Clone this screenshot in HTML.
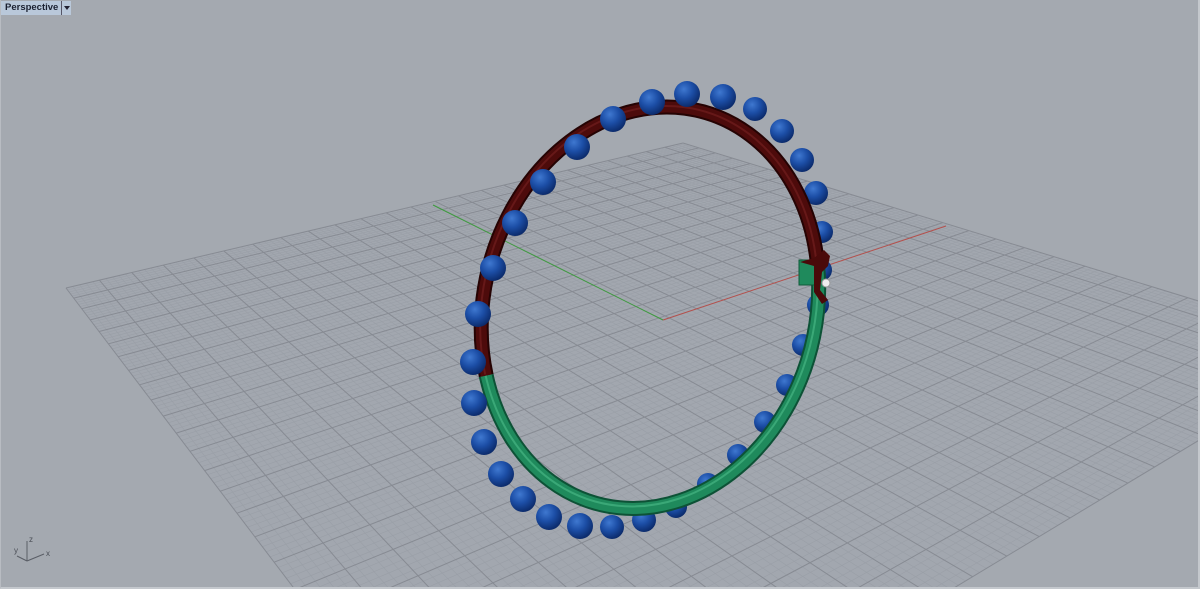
<!DOCTYPE html>
<html><head><meta charset="utf-8"><style>
html,body{margin:0;padding:0;width:1200px;height:589px;overflow:hidden;background:#a4a9b0}
#v{position:absolute;left:0;top:0;width:1200px;height:589px;display:block}
.bar{position:absolute;left:1px;top:1px;height:14px;display:flex}
.lab{height:14px;background:#b9c8da;font:bold 9.5px "Liberation Sans",sans-serif;color:#1a2030;line-height:14px;padding:0 3px 0 4px;white-space:nowrap}
.dd{position:relative;width:9px;height:14px;background:#b9c8da;border-left:1px solid #556}
.dd:after{content:"";position:absolute;left:2px;top:5px;border-left:3px solid transparent;border-right:3px solid transparent;border-top:4px solid #223}
.frame{position:absolute;left:0;top:0;width:1200px;height:589px;box-sizing:border-box;border:2px solid #c4c8cd;border-top:none;border-left:1px solid #b8bcc2}
</style></head><body>
<svg id="v" width="1200" height="589" viewBox="0 0 1200 589">
<defs>
<radialGradient id="bs" cx="0.38" cy="0.32" r="0.7">
<stop offset="0" stop-color="#3f78d0"/><stop offset="0.5" stop-color="#1c4ea6"/><stop offset="1" stop-color="#0b2a6a"/>
</radialGradient>
</defs>
<g id="grid"></g>
<line x1="663" y1="320" x2="433" y2="205" stroke="#3c9a3c" stroke-width="1"/>
<line x1="663" y1="320" x2="946" y2="226" stroke="#b4504c" stroke-width="1"/>
<g id="back"></g>
<path d="M486.2 375.5 A166 203 15 0 0 817.5 264" fill="none" stroke="#0d5236" stroke-width="15"/>
<path d="M486.2 375.5 A166 203 15 0 0 817.5 264" fill="none" stroke="#1f8a5c" stroke-width="11"/>
<path d="M486.2 375.5 A166 203 15 0 0 817.5 264" fill="none" stroke="#3aa877" stroke-width="2" transform="translate(-1,-2)"/>
<path d="M486.2 375.5 A166 203 15 1 1 817.5 264" fill="none" stroke="#250303" stroke-width="15"/>
<path d="M486.2 375.5 A166 203 15 1 1 817.5 264" fill="none" stroke="#4d0b0b" stroke-width="11"/>
<path d="M486.2 375.5 A166 203 15 1 1 817.5 264" fill="none" stroke="#661818" stroke-width="2" transform="translate(-1,-1)"/>
<g id="front"></g>
<rect x="799" y="260" width="17" height="25" fill="#1f8a5c" stroke="#0f5a3a"/>
<path d="M800 262 L814 258 L824 250 L830 256 L828 266 L822 272 L820 290 L828 300 L822 304 L814 292 L814 266 Z" fill="#4a0a0a"/>
<circle cx="826" cy="283" r="4" fill="#eeeeee" stroke="#999"/>
<g stroke="#5a5e66" stroke-width="1" fill="none">
<line x1="27" y1="561" x2="27" y2="541"/><line x1="27" y1="561" x2="44" y2="554"/><line x1="27" y1="561" x2="17" y2="556"/>
</g>
<g font-family="Liberation Sans,sans-serif" font-size="8" fill="#4a4e56">
<text x="29" y="542">z</text><text x="46" y="556">x</text><text x="14" y="553">y</text>
</g>
</svg>
<div class="bar"><div class="lab">Perspective</div><div class="dd"></div></div>
<div class="frame"></div>
<script>
var NS="http://www.w3.org/2000/svg";
var P=[[66,288],[683,143],[1352,348],[501,861]];
var x0=P[0][0],y0=P[0][1],x1=P[1][0],y1=P[1][1],x2=P[2][0],y2=P[2][1],x3=P[3][0],y3=P[3][1];
var dx1=x1-x2,dx2=x3-x2,dx3=x0-x1+x2-x3,dy1=y1-y2,dy2=y3-y2,dy3=y0-y1+y2-y3;
var den=dx1*dy2-dx2*dy1;
var g=(dx3*dy2-dx2*dy3)/den,h=(dx1*dy3-dx3*dy1)/den;
var a=x1-x0+g*x1,b=x3-x0+h*x3,c=x0,d=y1-y0+g*y1,e=y3-y0+h*y3,f=y0;
function M(u,v){var w=g*u+h*v+1;return[(a*u+b*v+c)/w,(d*u+e*v+f)/w];}
var G=document.getElementById("grid");
var poly=document.createElementNS(NS,"polygon");
poly.setAttribute("points",P.map(function(p){return p.join(",")}).join(" "));
poly.setAttribute("fill","#a2a7af");G.appendChild(poly);
var N=125;
function ln(p,q,maj){var l=document.createElementNS(NS,"line");
l.setAttribute("x1",p[0].toFixed(1));l.setAttribute("y1",p[1].toFixed(1));
l.setAttribute("x2",q[0].toFixed(1));l.setAttribute("y2",q[1].toFixed(1));
l.setAttribute("stroke",maj?"#878b93":"#9a9fa7");l.setAttribute("stroke-width",maj?"1":"0.6");G.appendChild(l);}
for(var pass=0;pass<2;pass++)for(var i=0;i<=N;i++){var t=i/N;var maj=(i%5==0);if(maj!=(pass==1))continue;
ln(M(t,0),M(t,1),maj);ln(M(0,t),M(1,t),maj);}
var back=[[782,131,12],[802,160,12],[816,193,12],[822,232,11],[821,270,11],[818,305,11],[803,345,11],[787,385,11],[765,422,11],[738,455,11],[708,484,11],[676,507,11],[644,520,12],[612,527,12]];
var front=[[478,314,13],[493,268,13],[515,223,13],[543,182,13],[577,147,13],[613,119,13],[652,102,13],[687,94,13],[723,97,13],[755,109,12],[473,362,13],[474,403,13],[484,442,13],[501,474,13],[523,499,13],[549,517,13],[580,526,13]];
function sp(id,arr){var Gg=document.getElementById(id);arr.forEach(function(s){var cc=document.createElementNS(NS,"circle");
cc.setAttribute("cx",s[0]);cc.setAttribute("cy",s[1]);cc.setAttribute("r",s[2]);cc.setAttribute("fill","url(#bs)");Gg.appendChild(cc);});}
sp("back",back);sp("front",front);
</script>
</body></html>
